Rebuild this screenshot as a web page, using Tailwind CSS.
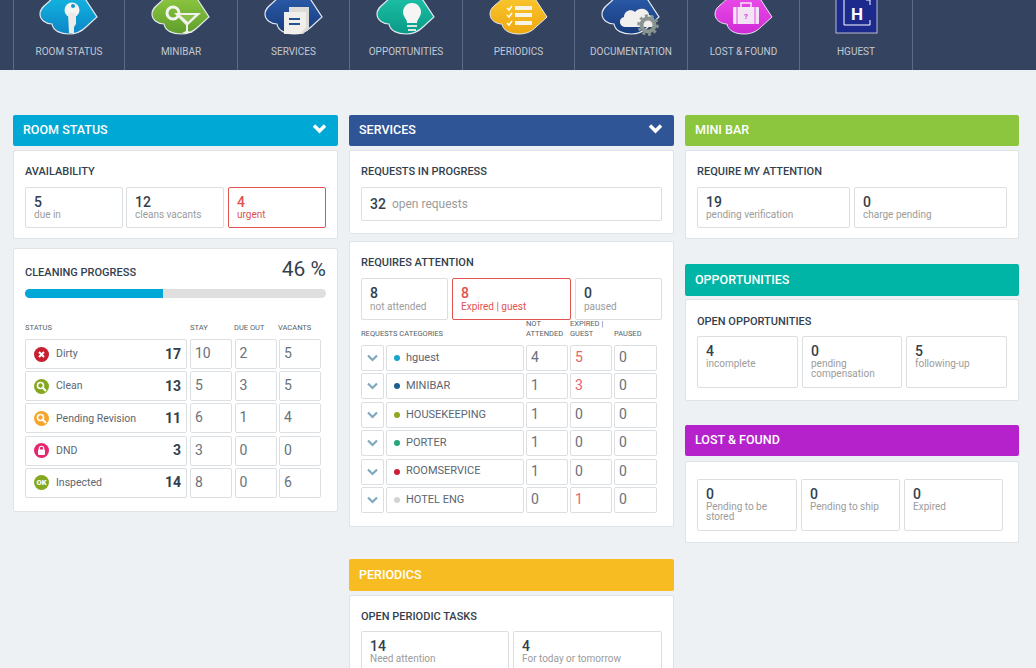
<!DOCTYPE html>
<html lang="en">
<head>
    <meta charset="UTF-8">
    <meta name="viewport" content="width=device-width, initial-scale=1.0">
    <title>Dashboard</title>
    <script src="https://cdn.jsdelivr.net/npm/@tailwindcss/browser@4"></script>
</head>
<body class="bg-[#edf1f4] text-[#333f4d] font-['Roboto','Open_Sans',sans-serif] h-[668px] overflow-hidden">

    <svg class="absolute w-0 h-0">
        <defs>
            <path id="tag" d="M14,-3C10,4 1,6 1,14C1,20 7,24 13,24C14,31 22,34 30,34C38,34 43,31 47,27L58,17L45,-3Z"/>
            <linearGradient id="g-cyan" x1="0" y1="0" x2="0" y2="1"><stop offset="0" stop-color="#12b4e0"/><stop offset="1" stop-color="#0b86c6"/></linearGradient>
            <linearGradient id="g-green" x1="0" y1="0" x2="0" y2="1"><stop offset="0" stop-color="#8cc63f"/><stop offset="1" stop-color="#5f9e2c"/></linearGradient>
            <linearGradient id="g-blue" x1="0" y1="0" x2="0" y2="1"><stop offset="0" stop-color="#2a5aa8"/><stop offset="1" stop-color="#173b7c"/></linearGradient>
            <linearGradient id="g-teal" x1="0" y1="0" x2="0" y2="1"><stop offset="0" stop-color="#1cc0a4"/><stop offset="1" stop-color="#0a9a88"/></linearGradient>
            <linearGradient id="g-yellow" x1="0" y1="0" x2="0" y2="1"><stop offset="0" stop-color="#f9c52d"/><stop offset="1" stop-color="#eea810"/></linearGradient>
            <linearGradient id="g-pink" x1="0" y1="0" x2="0" y2="1"><stop offset="0" stop-color="#ea4ae8"/><stop offset="1" stop-color="#cf2bd6"/></linearGradient>
        </defs>
    </svg>

    <!-- Top nav -->
    <nav class="h-[70px] bg-[#34435f] pl-[13px] flex overflow-hidden">
        <a class="w-[111px] border-l border-[#5d6b84] flex flex-col items-center">
            <svg class="w-[60px] h-[36px] shrink-0" viewBox="0 0 60 36">
                <use href="#tag" fill="url(#g-cyan)" stroke="#e4e8ee" stroke-width="1.2"/>
                <circle cx="33" cy="10" r="7.5" fill="#f4f4f2"/>
                <path d="M29,13H37V24L35,27V33H30Z" fill="#ecebe8"/>
                <circle cx="34" cy="6" r="2" fill="#1099cf"/>
            </svg>
            <span class="mt-[10px] text-[10px] leading-[12px] text-[#c3c9d3]">ROOM STATUS</span>
        </a>
        <a class="w-[113px] border-l border-[#5d6b84] flex flex-col items-center">
            <svg class="w-[60px] h-[36px] shrink-0" viewBox="0 0 60 36">
                <use href="#tag" fill="url(#g-green)" stroke="#e4e8ee" stroke-width="1.2"/>
                <circle cx="22" cy="13" r="6" fill="none" stroke="#f4f4f2" stroke-width="3"/>
                <path d="M23,13H50L37,25V31L42,33H31L35,31V25Z" fill="#f1f1ec"/>
                <path d="M29,15H44L37,22Z" fill="#8cbf4a"/>
            </svg>
            <span class="mt-[10px] text-[10px] leading-[12px] text-[#c3c9d3]">MINIBAR</span>
        </a>
        <a class="w-[112px] border-l border-[#5d6b84] flex flex-col items-center">
            <svg class="w-[60px] h-[36px] shrink-0" viewBox="0 0 60 36">
                <use href="#tag" fill="url(#g-blue)" stroke="#e4e8ee" stroke-width="1.2"/>
                <path d="M25,7H45V28L39,34H25Z" fill="#dedcd8"/>
                <path d="M20,12H42V27L36,34H20Z" fill="#f1efec"/>
                <path d="M25,18H36V20H25ZM25,23H36V25H25Z" fill="#23508f"/>
            </svg>
            <span class="mt-[10px] text-[10px] leading-[12px] text-[#c3c9d3]">SERVICES</span>
        </a>
        <a class="w-[113px] border-l border-[#5d6b84] flex flex-col items-center">
            <svg class="w-[60px] h-[36px] shrink-0" viewBox="0 0 60 36">
                <use href="#tag" fill="url(#g-teal)" stroke="#e4e8ee" stroke-width="1.2"/>
                <path d="M36,3C42,3 45,8 45,12C45,17 41,19 41,23H31C31,19 27,17 27,12C27,8 30,3 36,3Z" fill="#f5f6f4"/>
                <path d="M31,25H41V27H31ZM32,29H40V31H32Z" fill="#dfe6e0"/>
            </svg>
            <span class="mt-[10px] text-[10px] leading-[12px] text-[#c3c9d3]">OPPORTUNITIES</span>
        </a>
        <a class="w-[112px] border-l border-[#5d6b84] flex flex-col items-center">
            <svg class="w-[60px] h-[36px] shrink-0" viewBox="0 0 60 36">
                <use href="#tag" fill="url(#g-yellow)" stroke="#e4e8ee" stroke-width="1"/>
                <path d="M26,6H43V10H26ZM26,13H43V17H26ZM26,21H43V25H26Z" fill="#f7f3e6"/>
                <path d="M18,8L20,10L23,6M18,15L20,17L23,13M18,23L20,25L23,21" fill="none" stroke="#fff" stroke-width="1.5"/>
            </svg>
            <span class="mt-[10px] text-[10px] leading-[12px] text-[#c3c9d3]">PERIODICS</span>
        </a>
        <a class="w-[113px] border-l border-[#5d6b84] flex flex-col items-center">
            <svg class="w-[60px] h-[36px] shrink-0" viewBox="0 0 60 36">
                <use href="#tag" fill="url(#g-blue)" stroke="#e4e8ee" stroke-width="1.2"/>
                <path d="M24,27C18,27 17,18 23,17C23,11 30,8 34,12C39,6 48,9 48,15C54,16 55,23 51,27Z" fill="#f1f0ee"/>
                <circle cx="47" cy="25" r="6.5" fill="none" stroke="#8a9490" stroke-width="4"/>
                <circle cx="47" cy="25" r="9.5" fill="none" stroke="#8a9490" stroke-width="2.5" stroke-dasharray="3 2.9"/>
            </svg>
            <span class="mt-[10px] text-[10px] leading-[12px] text-[#c3c9d3]">DOCUMENTATION</span>
        </a>
        <a class="w-[112px] border-l border-[#5d6b84] flex flex-col items-center">
            <svg class="w-[60px] h-[36px] shrink-0" viewBox="0 0 60 36">
                <use href="#tag" fill="url(#g-pink)" stroke="#e4e8ee" stroke-width="1"/>
                <path d="M27,7V3H37V7" fill="none" stroke="#f4e6f5" stroke-width="1.5"/>
                <rect x="19" y="7" width="26" height="17" rx="1" fill="#f3e3f4"/>
                <path d="M23,7V24M41,7V24" stroke="#e04de0" stroke-width="1"/>
                <text x="32" y="19" text-anchor="middle" font-size="8" font-weight="700" fill="#d23cdc" font-family="Roboto">?</text>
            </svg>
            <span class="mt-[10px] text-[10px] leading-[12px] text-[#c3c9d3]">LOST &amp; FOUND</span>
        </a>
        <a class="w-[114px] border-x border-[#5d6b84] flex flex-col items-center">
            <svg class="w-[60px] h-[36px] shrink-0" viewBox="0 0 60 36">
                <rect x="10" y="-4" width="41" height="37" fill="#1c2a8e" stroke="#b8bcc8" stroke-width="1"/>
                <path d="M18,-4V25H44V20M40,0H44V5" fill="none" stroke="#fff" stroke-width="1"/>
                <text x="31" y="20" text-anchor="middle" font-size="17" font-weight="700" fill="#fff" font-family="Roboto">H</text>
            </svg>
            <span class="mt-[10px] text-[10px] leading-[12px] text-[#c3c9d3]">HGUEST</span>
        </a>
    </nav>

    <main class="pl-[13px] pt-[45px] grid grid-cols-[325px_325px_334px] gap-x-[11px] items-start">

        <!-- Room status column -->
        <section>
            <header class="h-[31px] bg-[#00a8d6] rounded-[2px] px-[10px] flex items-center justify-between text-white">
                <h2 class="text-[12.5px] font-medium">ROOM STATUS</h2>
                <svg class="w-[15px] h-[11px] mb-[4px] mr-[1px]" viewBox="0 0 15 11"><path d="M2,2.5L7.5,8L13,2.5" fill="none" stroke="#fff" stroke-width="3.5"/></svg>
            </header>
            <div class="mt-[4px] h-[89px] bg-white border border-[#dfe3e6] rounded-[2px] px-[11px] pt-[14px]">
                <h3 class="text-[11px] leading-[13px] font-medium">AVAILABILITY</h3>
                <div class="mt-[9px] flex gap-[3px]">
                    <div class="w-[98px] h-[41px] border border-[#dcdfe2] rounded-[2px] pl-[8px] pt-[7px]"><p class="text-[14px] leading-[15px] font-medium">5</p><p class="text-[10px] leading-[10px] text-[#9c9c9c]">due in</p></div>
                    <div class="w-[98px] h-[41px] border border-[#dcdfe2] rounded-[2px] pl-[8px] pt-[7px]"><p class="text-[14px] leading-[15px] font-medium">12</p><p class="text-[10px] leading-[10px] text-[#9c9c9c]">cleans vacants</p></div>
                    <div class="ml-[1px] w-[98px] h-[41px] border border-[#e2524f] rounded-[2px] pl-[8px] pt-[7px] text-[#e2524f]"><p class="text-[14px] leading-[15px] font-medium">4</p><p class="text-[10px] leading-[10px]">urgent</p></div>
                </div>
            </div>
            <div class="mt-[9px] h-[264px] bg-white border border-[#dfe3e6] rounded-[2px] px-[11px]">
                <div class="h-[31px] flex items-end justify-between">
                    <h3 class="text-[11px] leading-[14px] font-medium">CLEANING PROGRESS</h3>
                    <span class="text-[21px] leading-[26px] mb-[-2px]">46 %</span>
                </div>
                <div class="mt-[9px] w-[301px] h-[9px] rounded-full bg-[#dfdfdf] overflow-hidden"><div class="w-[138px] h-full bg-[#00a8d6]"></div></div>
                <div class="mt-[25px] flex text-[7.5px] leading-[10px] text-[#555f6b] h-[10px]">
                    <span class="w-[165px]">STATUS</span><span class="w-[44px]">STAY</span><span class="w-[44px]">DUE OUT</span><span>VACANTS</span>
                </div>
                <div id="status-rows" class="mt-[6px] flex flex-col gap-[2.2px]"></div>
            </div>
        </section>

        <!-- Services column -->
        <section>
            <header class="h-[31px] bg-[#2f5597] rounded-[2px] px-[10px] flex items-center justify-between text-white">
                <h2 class="text-[12.5px] font-medium">SERVICES</h2>
                <svg class="w-[15px] h-[11px] mb-[4px] mr-[1px]" viewBox="0 0 15 11"><path d="M2,2.5L7.5,8L13,2.5" fill="none" stroke="#fff" stroke-width="3.5"/></svg>
            </header>
            <div class="mt-[4px] h-[84px] bg-white border border-[#dfe3e6] rounded-[2px] px-[11px] pt-[14px]">
                <h3 class="text-[11px] leading-[13px] font-medium">REQUESTS IN PROGRESS</h3>
                <div class="mt-[9px] w-[301px] h-[34px] border border-[#dcdfe2] rounded-[2px] pl-[8px] flex items-center gap-[6px]"><span class="text-[14px] font-medium">32</span><span class="text-[12px] text-[#9c9c9c]">open requests</span></div>
            </div>
            <div class="mt-[7px] h-[286px] bg-white border border-[#dfe3e6] rounded-[2px] px-[11px] pt-[14px]">
                <h3 class="text-[11px] leading-[13px] font-medium">REQUIRES ATTENTION</h3>
                <div class="mt-[9px] flex gap-[4px]">
                    <div class="w-[87px] h-[42px] border border-[#dcdfe2] rounded-[2px] pl-[8px] pt-[7px]"><p class="text-[14px] leading-[15px] font-medium">8</p><p class="text-[10px] leading-[11px] text-[#9c9c9c]">not attended</p></div>
                    <div class="w-[119px] h-[42px] border border-[#e2524f] rounded-[2px] pl-[8px] pt-[7px] text-[#e2524f]"><p class="text-[14px] leading-[15px] font-medium">8</p><p class="text-[10px] leading-[11px]">Expired | guest</p></div>
                    <div class="w-[87px] h-[42px] border border-[#dcdfe2] rounded-[2px] pl-[8px] pt-[7px]"><p class="text-[14px] leading-[15px] font-medium">0</p><p class="text-[10px] leading-[11px] text-[#9c9c9c]">paused</p></div>
                </div>
                <div class="mt-[-1px] h-[20px] flex items-end text-[7.5px] leading-[10px] text-[#555f6b]">
                    <span class="w-[165px]">REQUESTS CATEGORIES</span><span class="w-[44px]">NOT ATTENDED</span><span class="w-[44px]">EXPIRED | GUEST</span><span>PAUSED</span>
                </div>
                <div id="category-rows" class="mt-[6px] flex flex-col gap-[2.4px] text-[#5b6570]"></div>
            </div>
            <header class="mt-[32px] h-[32px] bg-[#f7bc22] rounded-[2px] px-[10px] flex items-center text-white">
                <h2 class="text-[12.5px] font-medium">PERIODICS</h2>
            </header>
            <div class="mt-[4px] h-[120px] bg-white border border-[#dfe3e6] rounded-[2px] px-[11px] pt-[14px]">
                <h3 class="text-[11px] leading-[13px] font-medium">OPEN PERIODIC TASKS</h3>
                <div class="mt-[8px] flex gap-[4px]">
                    <div class="w-[148px] h-[52px] border border-[#dcdfe2] rounded-[2px] pl-[8px] pt-[7px]"><p class="text-[14px] leading-[15px] font-medium">14</p><p class="text-[10px] leading-[10px] text-[#9c9c9c]">Need attention</p></div>
                    <div class="w-[149px] h-[52px] border border-[#dcdfe2] rounded-[2px] pl-[8px] pt-[7px]"><p class="text-[14px] leading-[15px] font-medium">4</p><p class="text-[10px] leading-[10px] text-[#9c9c9c]">For today or tomorrow</p></div>
                </div>
            </div>
        </section>

        <!-- Right column -->
        <section>
            <header class="h-[31px] bg-[#8cc63f] rounded-[2px] px-[10px] flex items-center text-white">
                <h2 class="text-[12.5px] font-medium">MINI BAR</h2>
            </header>
            <div class="mt-[4px] h-[89px] bg-white border border-[#dfe3e6] rounded-[2px] px-[11px] pt-[14px]">
                <h3 class="text-[11px] leading-[13px] font-medium">REQUIRE MY ATTENTION</h3>
                <div class="mt-[9px] flex gap-[4px]">
                    <div class="w-[153px] h-[41px] border border-[#dcdfe2] rounded-[2px] pl-[8px] pt-[7px]"><p class="text-[14px] leading-[15px] font-medium">19</p><p class="text-[10px] leading-[10px] text-[#9c9c9c]">pending verification</p></div>
                    <div class="w-[153px] h-[41px] border border-[#dcdfe2] rounded-[2px] pl-[8px] pt-[7px]"><p class="text-[14px] leading-[15px] font-medium">0</p><p class="text-[10px] leading-[10px] text-[#9c9c9c]">charge pending</p></div>
                </div>
            </div>
            <header class="mt-[25px] h-[32px] bg-[#00b5a5] rounded-[2px] px-[10px] flex items-center text-white">
                <h2 class="text-[12.5px] font-medium">OPPORTUNITIES</h2>
            </header>
            <div class="mt-[3px] h-[102px] bg-white border border-[#dfe3e6] rounded-[2px] px-[11px] pt-[15px]">
                <h3 class="text-[11px] leading-[13px] font-medium">OPEN OPPORTUNITIES</h3>
                <div class="mt-[8px] flex gap-[4px]">
                    <div class="w-[101px] h-[52px] border border-[#dcdfe2] rounded-[2px] pl-[8px] pt-[7px]"><p class="text-[14px] leading-[15px] font-medium">4</p><p class="text-[10px] leading-[10px] text-[#9c9c9c]">incomplete</p></div>
                    <div class="w-[100px] h-[52px] border border-[#dcdfe2] rounded-[2px] pl-[8px] pt-[7px]"><p class="text-[14px] leading-[15px] font-medium">0</p><p class="text-[10px] leading-[10px] text-[#9c9c9c]">pending compensation</p></div>
                    <div class="w-[101px] h-[52px] border border-[#dcdfe2] rounded-[2px] pl-[8px] pt-[7px]"><p class="text-[14px] leading-[15px] font-medium">5</p><p class="text-[10px] leading-[10px] text-[#9c9c9c]">following-up</p></div>
                </div>
            </div>
            <header class="mt-[24px] h-[31px] bg-[#b522cc] rounded-[2px] px-[10px] flex items-center text-white">
                <h2 class="text-[12.5px] font-medium">LOST &amp; FOUND</h2>
            </header>
            <div class="mt-[5px] h-[82px] bg-white border border-[#dfe3e6] rounded-[2px] px-[11px] pt-[17px]">
                <div class="flex gap-[4px]">
                    <div class="w-[100px] h-[52px] border border-[#dcdfe2] rounded-[2px] pl-[8px] pt-[7px]"><p class="text-[14px] leading-[15px] font-medium">0</p><p class="text-[10px] leading-[10px] text-[#9c9c9c]">Pending to be stored</p></div>
                    <div class="w-[99px] h-[52px] border border-[#dcdfe2] rounded-[2px] pl-[8px] pt-[7px]"><p class="text-[14px] leading-[15px] font-medium">0</p><p class="text-[10px] leading-[10px] text-[#9c9c9c]">Pending to ship</p></div>
                    <div class="w-[99px] h-[52px] border border-[#dcdfe2] rounded-[2px] pl-[8px] pt-[7px]"><p class="text-[14px] leading-[15px] font-medium">0</p><p class="text-[10px] leading-[10px] text-[#9c9c9c]">Expired</p></div>
                </div>
            </div>
        </section>
    </main>

    <script>
        const lens = '<circle cx="6.5" cy="6.5" r="3" fill="none" stroke="#fff" stroke-width="1.6"/><path d="M8.7,8.7L12,12" stroke="#fff" stroke-width="2"/>';
        const statuses = [
            { name: 'Dirty', total: 17, cells: [10, 2, 5], icon: '<circle cx="7.5" cy="7.5" r="7.5" fill="#c71f2d"/><path d="M5,5L10,10M10,5L5,10" stroke="#fff" stroke-width="2"/>' },
            { name: 'Clean', total: 13, cells: [5, 3, 5], icon: '<circle cx="7.5" cy="7.5" r="7.5" fill="#85a820"/>' + lens },
            { name: 'Pending Revision', total: 11, cells: [6, 1, 4], icon: '<circle cx="7.5" cy="7.5" r="7.5" fill="#f6a52b"/>' + lens },
            { name: 'DND', total: 3, cells: [3, 0, 0], icon: '<circle cx="7.5" cy="7.5" r="7.5" fill="#e5266f"/><rect x="4" y="6.5" width="7" height="5.5" rx="1" fill="#fff"/><path d="M5.3,7V5.2C5.3,2.6 9.7,2.6 9.7,5.2V7" fill="none" stroke="#fff" stroke-width="1.2"/>' },
            { name: 'Inspected', total: 14, cells: [8, 0, 6], icon: '<circle cx="7.5" cy="7.5" r="7.5" fill="#85a820"/><text x="7.5" y="10" text-anchor="middle" font-size="7.5" font-weight="900" fill="#fff" font-family="Roboto">OK</text>' },
        ];
        const categories = [
            { name: 'hguest', dot: '#1aa3cf', cells: [4, 5, 0] },
            { name: 'MINIBAR', dot: '#1d5f8f', cells: [1, 3, 0] },
            { name: 'HOUSEKEEPING', dot: '#8fa81f', cells: [1, 0, 0] },
            { name: 'PORTER', dot: '#27a67c', cells: [1, 0, 0] },
            { name: 'ROOMSERVICE', dot: '#cf1f37', cells: [1, 0, 0] },
            { name: 'HOTEL ENG', dot: '#d3d3d3', cells: [0, 1, 0] },
        ];

        document.getElementById('status-rows').innerHTML = statuses.map(row => `
            <div class="flex gap-[2.5px] h-[30px]">
                <div class="w-[162px] mr-[.5px] border border-[#dcdfe2] rounded-[2px] flex items-center pl-[8px] pr-[5px]">
                    <svg class="w-[15px] h-[15px]" viewBox="0 0 15 15">${row.icon}</svg>
                    <span class="ml-[7px] text-[10.5px] text-[#5b6570]">${row.name}</span><span class="ml-auto text-[14px] font-bold">${row.total}</span>
                </div>
                ${row.cells.map(n => `<div class="w-[42px] border border-[#dcdfe2] rounded-[2px] pl-[4px] text-[14px] leading-[26px] text-[#68727c]">${n}</div>`).join('')}
            </div>`).join('');

        document.getElementById('category-rows').innerHTML = categories.map(row => `
            <div class="flex gap-[2px] h-[26px]">
                <div class="w-[23px] border border-[#dcdfe2] rounded-[2px] flex items-center justify-center"><svg class="w-[11px] h-[8px]" viewBox="0 0 11 8"><path d="M1,1.5L5.5,6L10,1.5" fill="none" stroke="#7fa8bf" stroke-width="2.2"/></svg></div>
                <div class="w-[138px] border border-[#dcdfe2] rounded-[2px] flex items-center pl-[7px] gap-[6px] text-[11px]"><i class="w-[6px] h-[6px] rounded-full" style="background:${row.dot}"></i>${row.name}</div>
                <div class="w-[42px] border border-[#dcdfe2] rounded-[2px] pl-[4px] text-[14px] leading-[22px] text-[#68727c]">${row.cells[0]}</div>
                <div class="w-[42px] border border-[#dcdfe2] rounded-[2px] pl-[4px] text-[14px] leading-[22px] ${row.cells[1] > 0 ? 'text-[#e8636a]' : 'text-[#68727c]'}">${row.cells[1]}</div>
                <div class="w-[43px] border border-[#dcdfe2] rounded-[2px] pl-[4px] text-[14px] leading-[22px] text-[#68727c]">${row.cells[2]}</div>
            </div>`).join('');
    </script>
</body>
</html>
